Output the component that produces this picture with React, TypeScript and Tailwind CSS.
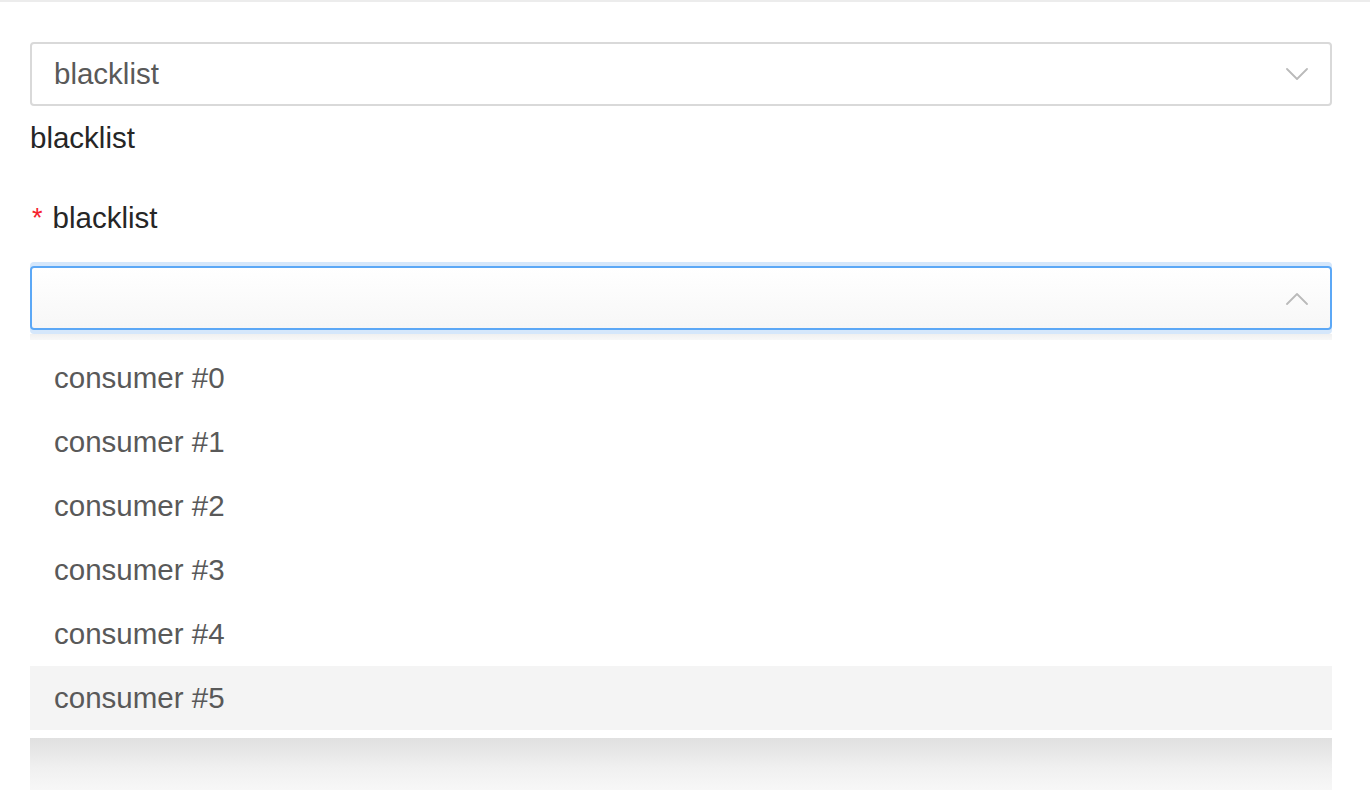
import React from 'react'

const font = { fontFamily: '"Liberation Sans", Arial, sans-serif' }

const Chevron: React.FC<{ up?: boolean }> = ({ up }) => (
  <svg width="22" height="13" viewBox="0 0 22 13" fill="none" className="shrink-0">
    <path
      d={up ? 'M1 12 L11 2 L21 12' : 'M1 1 L11 11 L21 1'}
      stroke="#bababa"
      strokeWidth="1.8"
      strokeLinecap="round"
      strokeLinejoin="round"
    />
  </svg>
)

const items = ['consumer #0', 'consumer #1', 'consumer #2', 'consumer #3', 'consumer #4', 'consumer #5']

export default function App() {
  return (
    <div className="w-[1370px] h-[790px] overflow-hidden bg-white" style={font}>
      <div className="h-[2px] bg-[#ececec]" />
      <div className="pl-[30px] pr-[38px]">
        <div className="mt-[40px] h-[64px] border-2 border-[#d9d9d9] rounded-[4px] flex items-center justify-between pl-[22px] pr-[22px]">
          <span className="text-[29.5px] text-[#595959]">blacklist</span>
          <Chevron />
        </div>

        <div className="mt-[12px] leading-[40px] text-[29.5px] text-[#262626]">blacklist</div>

        <div className="mt-[40px] leading-[40px] text-[29.5px] text-[#262626] flex items-center">
          <span className="text-[#f5222d] text-[27px] mr-[10px] ml-[2px]">*</span>
          <span>blacklist</span>
        </div>

        <div className="mt-[28px] h-[64px] border-2 border-[#5ca8f6] rounded-[4px] flex items-center justify-end pr-[22px] bg-gradient-to-b from-white to-[#f7f7f7] shadow-[0_-4px_0_0_#d5e7fb,0_4px_0_0_#d5e7fb]">
          <Chevron up />
        </div>

        <div className="mt-[4px] h-[6px] bg-gradient-to-b from-[#f0f0f0] to-[#f8f8f8]" />

        <div className="bg-white rounded-b-[4px] pt-[6px] pb-[8px]">
          {items.map((it, i) => (
            <div
              key={it}
              className={
                'h-[64px] flex items-center pl-[24px] text-[29.5px] text-[#595959] ' +
                (i === 5 ? 'bg-[#f4f4f4]' : '')
              }
            >
              {it}
            </div>
          ))}
        </div>

        <div className="h-[60px] bg-gradient-to-b from-[#e0e0e0] via-[#f0f0f0] to-[#fafafa]" />
      </div>
    </div>
  )
}
